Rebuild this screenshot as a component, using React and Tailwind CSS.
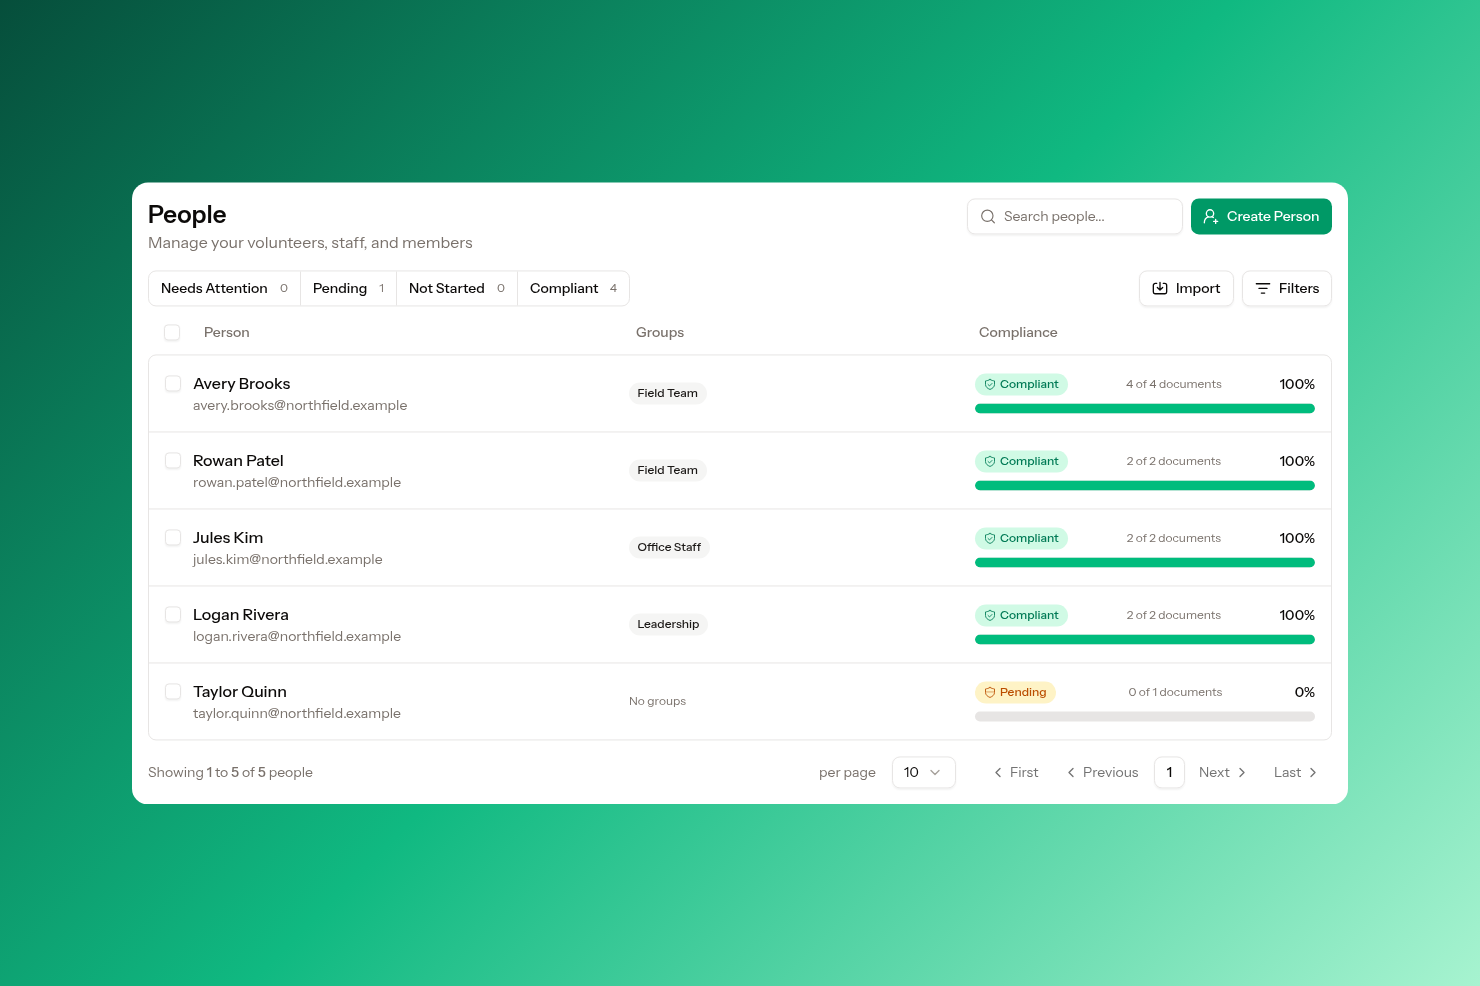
import { ChevronDown, ChevronLeft, ChevronRight } from "lucide-react";

const people = [
  { name: "Avery Brooks", email: "avery.brooks@northfield.example", group: "Field Team", done: 4, total: 4 },
  { name: "Rowan Patel", email: "rowan.patel@northfield.example", group: "Field Team", done: 2, total: 2 },
  { name: "Jules Kim", email: "jules.kim@northfield.example", group: "Office Staff", done: 2, total: 2 },
  { name: "Logan Rivera", email: "logan.rivera@northfield.example", group: "Leadership", done: 2, total: 2 },
  { name: "Taylor Quinn", email: "taylor.quinn@northfield.example", group: null, done: 0, total: 1 },
];

const tabs = [
  { label: "Needs Attention", count: 0, width: "w-[152px]" },
  { label: "Pending", count: 1, width: "w-[96px]" },
  { label: "Not Started", count: 0, width: "w-[121px]" },
  { label: "Compliant", count: 4, width: "w-[111px]" },
];

const Icon = ({ className, children, strokeWidth = 1.75 }) => (
  <svg viewBox="0 0 24 24" fill="none" stroke="currentColor" strokeWidth={strokeWidth} strokeLinecap="round" strokeLinejoin="round" className={className}>
    {children}
  </svg>
);

const SearchIcon = () => (
  <Icon className="size-4 shrink-0">
    <circle cx="11" cy="11" r="8.5" />
    <path d="m17.2 17.2 4.3 4.3" />
  </Icon>
);

const UserAddIcon = () => (
  <Icon className="size-4 shrink-0" strokeWidth={2}>
    <circle cx="10.5" cy="7.5" r="5.5" />
    <path d="M2 21.5c0-4.500 2.500-7.500 6-8.700M13.500 12.500l2 1" />
    <path d="M19 16.500v6M16 19.500h6" />
  </Icon>
);

const ImportIcon = () => (
  <Icon className="size-4 shrink-0" strokeWidth={2}>
    <path d="M7 4.500H5a3 3 0 0 0-3 3v10A2.500 2.500 0 0 0 4.500 20h15a2.500 2.500 0 0 0 2.500-2.500v-10a3 3 0 0 0-3-3h-2" />
    <path d="M12 3v11M8 10.500l4 4 4-4" />
  </Icon>
);

const FilterIcon = () => (
  <Icon className="size-4 shrink-0" strokeWidth={2}>
    <path d="M2 5h20M6 12h12M9.5 19h5" />
  </Icon>
);

const ShieldIcon = ({ checked }) => (
  <Icon className="size-3 shrink-0" strokeWidth={1.75}>
    <path d="M12 2C9 4 6 4.5 3 5v7c0 5 4 8 9 10 5-2 9-5 9-10V5c-3-.5-6-1-9-3Z" />
    {checked ? <path d="m8 12 3 3 5-5" /> : <path d="M4 11h16" strokeWidth="1" />}
  </Icon>
);

const Checkbox = () => (
  <span className="block size-4 shrink-0 rounded-[4px] border border-stone-200 bg-white shadow-xs" />
);

const StatusBadge = ({ compliant }) => (
  <span
    className={
      compliant
        ? "flex h-[22px] w-[93px] items-center gap-1 rounded-full bg-emerald-100 pl-[9px] text-emerald-700"
        : "flex h-[22px] w-[81px] items-center gap-1 rounded-full bg-amber-100 pl-[9px] text-amber-700"
    }
  >
    <ShieldIcon checked={compliant} />
    <span className="text-xs font-medium">{compliant ? "Compliant" : "Pending"}</span>
  </span>
);

const PersonRow = ({ person }) => {
  const percent = Math.round((person.done / person.total) * 100);
  return (
    <div className="flex h-[77px] border-b border-stone-200 last:h-[76px] last:border-b-0">
      <div className="flex w-[480px] gap-3 pl-4 pt-[17px]">
        <div className="pt-[3px]">
          <Checkbox />
        </div>
        <div>
          <p className="text-base leading-[22px] font-medium text-stone-950">{person.name}</p>
          <p className="text-sm leading-[22px] text-stone-500">{person.email}</p>
        </div>
      </div>
      <div className="flex w-[346px] items-center">
        {person.group ? (
          <span className="flex h-[22px] items-center rounded-full bg-stone-100 px-[8.5px] text-xs font-medium text-stone-900">{person.group}</span>
        ) : (
          <span className="text-xs text-stone-500">No groups</span>
        )}
      </div>
      <div className="w-[340px] pt-[18px]">
        <div className="flex h-[22px] items-center justify-between">
          <StatusBadge compliant={percent === 100} />
          <span className="text-xs text-stone-500">{person.done} of {person.total} documents</span>
          <span className="text-sm font-medium text-stone-950">{percent}%</span>
        </div>
        <div className="mt-2 h-2.5 overflow-hidden rounded-full bg-stone-200">
          <div className="h-full rounded-full bg-emerald-500" style={{ width: `${percent}%` }} />
        </div>
      </div>
    </div>
  );
};

const Pagination = () => (
  <div className="flex h-8 items-center text-sm text-stone-500">
    <p className="w-[671px]">
      Showing <b className="font-medium">1</b> to <b className="font-medium">5</b> of <b className="font-medium">5</b> people
    </p>
    <span className="w-[73px]">per page</span>
    <button className="flex h-8 w-16 items-center justify-between rounded-lg border border-stone-200 pr-3 pl-[11px] text-stone-950 shadow-xs">
      10 <ChevronDown className="size-4 text-stone-400" />
    </button>
    <div className="ml-[34px] flex items-center text-neutral-500">
      <button className="flex w-[73px] items-center gap-1"><ChevronLeft className="size-4" />First</button>
      <button className="flex w-[91px] items-center gap-1"><ChevronLeft className="size-4" />Previous</button>
      <button className="h-8 w-[31px] rounded-lg border border-stone-200 font-medium text-stone-950 shadow-xs">1</button>
      <button className="ml-[14px] flex w-[75px] items-center gap-1">Next<ChevronRight className="size-4" /></button>
      <button className="flex items-center gap-1">Last<ChevronRight className="size-4" /></button>
    </div>
  </div>
);

const App = () => {
  return (
    <div className="flex h-screen items-center justify-center bg-[linear-gradient(135deg,#064e3b_0%,#10b981_50%,#a7f3d0_100%)] font-['Instrument_Sans','Inter',sans-serif]">
      <main className="h-[622px] w-[1216px] translate-y-[0.45px] rounded-2xl bg-white p-4 will-change-transform">
        <header className="flex h-[72px] justify-between">
          <div>
            <h1 className="pt-px text-2xl leading-[31px] font-semibold text-stone-950">People</h1>
            <p className="text-base leading-6 text-stone-500">Manage your volunteers, staff, and members</p>
          </div>
          <div className="flex gap-2">
            <label className="flex h-9 w-[216px] items-center gap-2 rounded-lg border border-stone-200 px-3 text-stone-500 shadow-xs">
              <SearchIcon />
              <input placeholder="Search people..." className="w-full text-sm outline-none placeholder:text-stone-500" />
            </label>
            <button className="flex h-9 w-[141px] items-center gap-2 rounded-lg bg-emerald-600 px-3 text-sm font-medium whitespace-nowrap text-white">
              <UserAddIcon />
              Create Person
            </button>
          </div>
        </header>

        <div className="flex justify-between">
          <div className="flex h-9 rounded-lg border border-stone-200">
            {tabs.map((tab) => (
              <button key={tab.label} className={`flex items-center justify-between border-r border-stone-200 px-3 text-sm font-medium whitespace-nowrap text-stone-950 last:border-r-0 ${tab.width}`}>
                {tab.label}
                <span className="text-xs font-normal text-stone-500">{tab.count}</span>
              </button>
            ))}
          </div>
          <div className="flex gap-2">
            <button className="flex h-9 w-[95px] items-center gap-2 rounded-lg border border-stone-200 px-3 text-sm font-medium text-stone-950 shadow-xs">
              <ImportIcon />
              Import
            </button>
            <button className="flex h-9 w-[90px] items-center gap-2 rounded-lg border border-stone-200 px-3 text-sm font-medium text-stone-950 shadow-xs">
              <FilterIcon />
              Filters
            </button>
          </div>
        </div>

        <div className="flex h-12 items-center pt-1 pl-4 text-sm font-medium text-stone-500">
          <div className="flex w-[472px] items-center gap-6">
            <Checkbox />
            Person
          </div>
          <span className="w-[343px]">Groups</span>
          <span>Compliance</span>
        </div>

        <section className="mb-4 rounded-lg border border-stone-200">
          {people.map((person) => (
            <PersonRow key={person.email} person={person} />
          ))}
        </section>

        <Pagination />
      </main>
    </div>
  );
};

export default App;
